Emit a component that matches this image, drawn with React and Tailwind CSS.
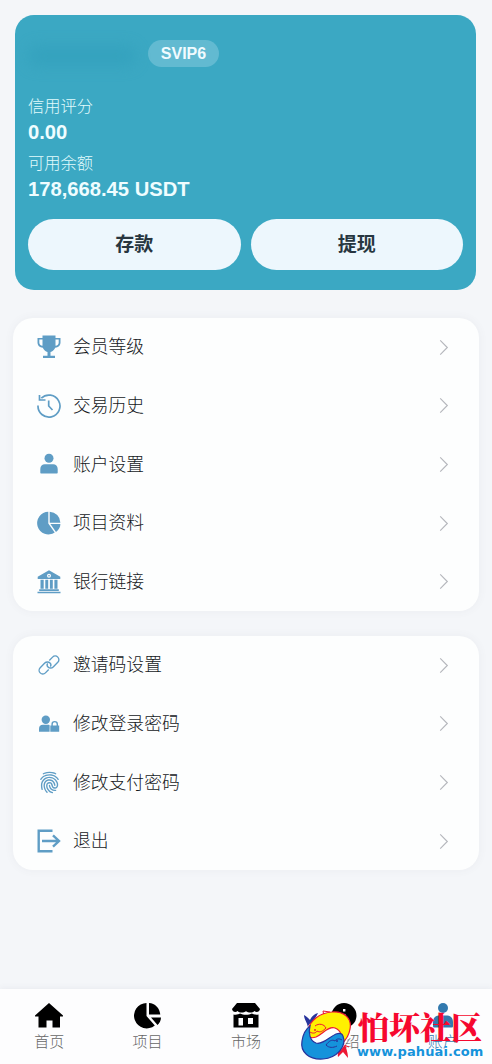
import { IoFingerPrint } from "react-icons/io5";

const icons = {
  trophy: (
    <svg viewBox="0 0 24 24" className="size-6">
      <path
        fill="currentColor"
        fillRule="evenodd"
        d="M5.500.5h13V3H23.500v4.500c0 3-2.300 5-5.300 5.200-1 2.300-2.700 3.700-4.700 4.300v3.700H18v2.400H6v-2.400h4.500V17c-2-.6-3.700-2-4.700-4.300C2.800 12.500.5 10.500.5 7.500V3h5V.5Zm0 4.100H2.300v2.900c0 1.700 1.200 3 3.200 3.300V4.600Zm13 0v6.200c2-.3 3.200-1.600 3.200-3.300V4.600h-3.200Z"
      />
    </svg>
  ),
  history: (
    <svg viewBox="0 0 24 24" className="size-6" fill="none" stroke="currentColor" strokeWidth="1.700">
      <path d="M1 11.500a11 11 0 1 0 3.300-7.300M2.500 1v5h6M11.700 6.500V12l3.800 4" />
    </svg>
  ),
  user: (
    <svg viewBox="0 0 24 24" className="size-6" fill="currentColor">
      <circle cx="12" cy="6.200" r="4.500" />
      <path d="M3.300 20.500V17c0-3 2-4.700 4.500-4.700h8.400c2.500 0 4.500 1.700 4.500 4.700v3.500c0 .6-.4 1-1 1H4.300c-.6 0-1-.4-1-1Z" />
    </svg>
  ),
  pie: (
    <svg viewBox="0 0 24 24" className="size-6" fill="currentColor">
      <path d="M11.300.8v11.700l6.400 9A11.300 11.300 0 1 1 11.300.8ZM12.700.8a11 11 0 0 1 10.700 10.900H12.700V.8ZM13.400 13.100h10c0 2.900-1.500 5.900-4.400 8l-5.600-8Z" />
    </svg>
  ),
  bank: (
    <svg viewBox="0 0 24 24" className="size-6" fill="currentColor">
      <path fillRule="evenodd" d="M12 .3 23.300 6.800V9H.7V6.800L12 .3Zm0 3.400a2 2 0 1 0 0 4 2 2 0 0 0 0-4Z" />
      <path d="M3.500 9.800h3.200v9H3.500zM8.300 9.800h2.900v9H8.300zM12.900 9.800h2.900v9h-2.900zM17.400 9.800h3.100v9h-3.100zM2.200 19.300h19.600V21H2.200zM.5 21.700h23v1.600H.5z" />
      <circle cx="12" cy="5.700" r=".8" />
    </svg>
  ),
  link: (
    <svg viewBox="0 0 24 24" className="size-[22px]" fill="none" stroke="currentColor" strokeWidth="1.500">
      <path d="m12.300 7 3.600-3.600a4 4 0 0 1 5.700 5.700l-5 5a4 4 0 0 1-5.700 0 3.200 3.200 0 0 1-.4-4" />
      <path d="m11.700 17-3.600 3.600a4 4 0 0 1-5.700-5.700l5-5a4 4 0 0 1 5.700 0 3.200 3.200 0 0 1 .4 4" />
    </svg>
  ),
  userLock: (
    <svg viewBox="0 0 24 24" className="size-6" fill="currentColor">
      <circle cx="8.800" cy="7.800" r="4.200" />
      <path d="M2 19.800v-3c0-2.500 1.500-4 3.900-4h5c.8 0 1.200.1 1.700.4v6.600H2Z" />
      <path
        fillRule="evenodd"
        d="M13.300 13.500h1.100v-1.300a3.300 3.300 0 0 1 6.600 0v1.300h1.200v6.300h-8.900v-6.300Zm2.500 0h3.800v-1.300a1.900 1.900 0 0 0-3.800 0v1.300Z"
      />
    </svg>
  ),
  fingerprint: <IoFingerPrint className="size-[23px]" />,
  logout: (
    <svg viewBox="0 0 24 24" className="size-6" fill="none" stroke="currentColor" strokeWidth="2.400">
      <path d="M15.500 1.700H1.700v20.600h13.800M5 12h17M16 6.300l6 5.700-6 5.700" />
    </svg>
  ),
};

const accountItems = [
  { icon: "trophy", label: "会员等级" },
  { icon: "history", label: "交易历史" },
  { icon: "user", label: "账户设置" },
  { icon: "pie", label: "项目资料" },
  { icon: "bank", label: "银行链接" },
];

const securityItems = [
  { icon: "link", label: "邀请码设置" },
  { icon: "userLock", label: "修改登录密码" },
  { icon: "fingerprint", label: "修改支付密码" },
  { icon: "logout", label: "退出" },
];

function MenuCard({ items }) {
  return (
    <div className="rounded-[20px] bg-[#fdfefe] shadow-[0_0_10px_rgba(80,90,110,0.06)]">
      {items.map((item) => (
        <button key={item.label} className="flex h-[58.600px] w-full items-center pr-7 pl-6 text-left">
          <span className="flex size-6 items-center justify-center text-[#5f9dc5]">{icons[item.icon]}</span>
          <span className="ml-3 flex-1 pt-px text-[17.800px] font-light text-[#15181c]">{item.label}</span>
          <svg viewBox="0 0 12 18" className="mr-px h-[17px] w-3" fill="none" stroke="#b4b6bc" strokeWidth="1.200">
            <path d="M2 1.500 9.500 9 2 16.500" />
          </svg>
        </button>
      ))}
    </div>
  );
}

function BalanceCard() {
  return (
    <div className="mr-[3px] ml-0.5 h-[275px] rounded-[19px] bg-[#3ba8c3] px-[13px] pt-6">
      <div className="flex h-7 items-center">
        <div className="mt-1.5 h-5 w-[108px] rounded-full bg-[#319fba]/60 blur-[7px]" />
        <span className="ml-3 flex h-[27px] w-[71px] items-center justify-center rounded-full bg-[#62bad1] pt-0.5 text-base font-bold text-[#f0fbff]">
          SVIP6
        </span>
      </div>
      <p className="mt-[27px] text-[16.300px] leading-6 font-light text-[#e2fbfd]">信用评分</p>
      <p className="mt-px text-[20.200px] leading-[27px] font-bold text-[#effdff]">0.00</p>
      <p className="mt-[5px] text-[16.300px] leading-6 font-light text-[#e2fbfd]">可用余额</p>
      <p className="mt-px text-[20.200px] leading-[27px] font-bold text-[#effdff]">178,668.45 USDT</p>
      <div className="mt-4 flex gap-2.5">
        <button className="h-[51px] flex-1 rounded-full bg-[#edf7fd] pt-0.5 text-[19px] font-bold text-[#273640]">存款</button>
        <button className="h-[51px] flex-1 rounded-full bg-[#edf7fd] pt-0.5 text-[19px] font-bold text-[#273640]">提现</button>
      </div>
    </div>
  );
}

const tabs = [
  {
    label: "首页",
    icon: (
      <path d="M14 1 28 13.500c.3.500 0 1-.6 1H25V25.500h-7.500v-7h-6v7H3.500v-11H.6c-.6 0-.9-.5-.6-1L14 1Z" />
    ),
  },
  {
    label: "项目",
    icon: (
      <path d="M12.500 1v13l8.300 9.500A12.700 12.700 0 1 1 12.500 1ZM15 1c6 .4 10.700 5 11.300 11.500H15V1ZM17 15.500h10c-.1 3-1.400 5.500-3.500 7.500L17 15.500Z" />
    ),
  },
  {
    label: "市场",
    icon: (
      <path
        fillRule="evenodd"
        d="M5 1h18l5 6c-.5 3.300-4 3.500-5.500 2-2 2-6 2-8.500.3-2.500 1.700-6.500 1.700-8.500-.3C4 10.500.5 10.300 0 7l5-6ZM1.500 12.500c3 .6 5-.2 6.500-1 3.500 1.700 8.500 1.700 12 0 1.500.8 3.500 1.600 6.500 1v13h-25v-13Zm5 3.500v7.500H11V16H6.500Zm9.500 0v6h5v-6h-5Z"
      />
    ),
  },
  {
    label: "介绍",
    icon: <path fillRule="evenodd" d="M14 1a12.500 12.500 0 1 0 0 25 12.500 12.500 0 0 0 0-25Zm-1 6h2.400v2.500H13V7Zm0 5h2.400v8H13v-8Z" />,
  },
  {
    label: "账户",
    active: true,
    icon: (
      <>
        <circle cx="14" cy="6" r="5" />
        <path d="M4 24v-4c0-4 2.500-6.500 5.500-6.500h9c3 0 5.500 2.500 5.500 6.500v4c0 1-.5 1.500-1.500 1.500h-17C4.500 25.500 4 25 4 24Z" />
      </>
    ),
  },
];

function CommunityMark() {
  return (
    <div className="pointer-events-none absolute right-[3px] bottom-0 h-[62px] w-[190px]">
      <svg viewBox="0 0 56 62" className="absolute bottom-0 left-0 h-[62px] w-14">
        {/* tails */}
        <path d="M9 27C9 21 5 18 5 13c2 1 4 3 6 5 1-3 4-6 8-7-2 5-5 7-6 11l-2 6Z" fill="#27339c" />
        <path d="M42 42c-1 5-4 8-3 13l5-5 5 6c0-6-2-9-3-15Z" fill="#ed1734" />
        <path d="m25 14-1-5 7 1m14 33 5 2" fill="none" stroke="#ed1734" strokeWidth="1" />
        {/* white edge between the two fish */}
        <ellipse cx="27" cy="34" rx="25" ry="20" fill="#fff" transform="rotate(-38 27 34)" />
        <path
          d="M10 34C6 24 17 11 33 10c13-1 20 7 18 17-1 7-5 12-9 16 2-8 0-15-6-17-7-2-12 6-19 9-3 1-6 1-7-1Z"
          fill="#fff000"
          stroke="#ed1734"
          strokeWidth="1.200"
        />
        <path
          d="M44 34c4 10-6 22-20 23C10 58 1 50 3 39c1-7 4-12 8-15-2 7 0 15 6 17 7 2 13-6 20-9 3-1 6-1 7 2Z"
          fill="#1593db"
          stroke="#27339c"
          strokeWidth="1.200"
        />
        <path d="M11 30c3 2 6 1 7-1 3 2 6 0 9-3-2-4-7-5-11-2" fill="none" stroke="#ed1734" />
        <path d="M43 38c-3-2-6-1-7 1-3-2-6 0-9 4 3 3 7 3 11 1" fill="none" stroke="#27339c" />
        <circle cx="16" cy="28" r="1" fill="#ed1734" />
        <circle cx="38" cy="39" r="1" fill="#27339c" />
      </svg>
      <strong className="absolute top-[3px] left-[59px] font-['Noto_Serif_CJK_SC','Noto_Sans_CJK_SC',serif] text-[31px] leading-[42px] font-black whitespace-nowrap text-[#f6082f]">
        怕坏社区
      </strong>
      <span className="absolute top-[42px] left-[58px] font-['DejaVu_Sans',sans-serif] text-[13px] leading-4 font-bold tracking-[0.100px] whitespace-nowrap text-[#1593db]">
        www.pahuai.com
      </span>
    </div>
  );
}

function BottomNav() {
  return (
    <nav className="relative flex h-[75px] bg-[#fdfdfe] shadow-[0_-1px_6px_rgba(80,90,110,0.07)]">
      {tabs.map((tab) => (
        <div
          key={tab.label}
          className={`flex flex-1 flex-col items-center pt-[13px] ${tab.active ? "text-[#3279ae]" : "text-black"}`}
        >
          <svg viewBox="0 0 28 27" className="h-[27px] w-7" fill="currentColor">
            {tab.icon}
          </svg>
          <span className={`mt-px text-[15px] leading-6 font-light ${tab.active ? "text-[#3279ae]" : "text-[#666]"}`}>
            {tab.label}
          </span>
        </div>
      ))}
      <CommunityMark />
    </nav>
  );
}

export default function App() {
  return (
    <div className="flex h-screen flex-col overflow-hidden bg-[#f4f6f9] font-['Liberation_Sans','Noto_Sans_CJK_SC',sans-serif]">
      <main className="flex-1 pt-[15px] pr-[13px] pl-[13px]">
        <BalanceCard />
        <div className="mt-7">
          <MenuCard items={accountItems} />
        </div>
        <div className="mt-[25px]">
          <MenuCard items={securityItems} />
        </div>
      </main>
      <BottomNav />
    </div>
  );
}
